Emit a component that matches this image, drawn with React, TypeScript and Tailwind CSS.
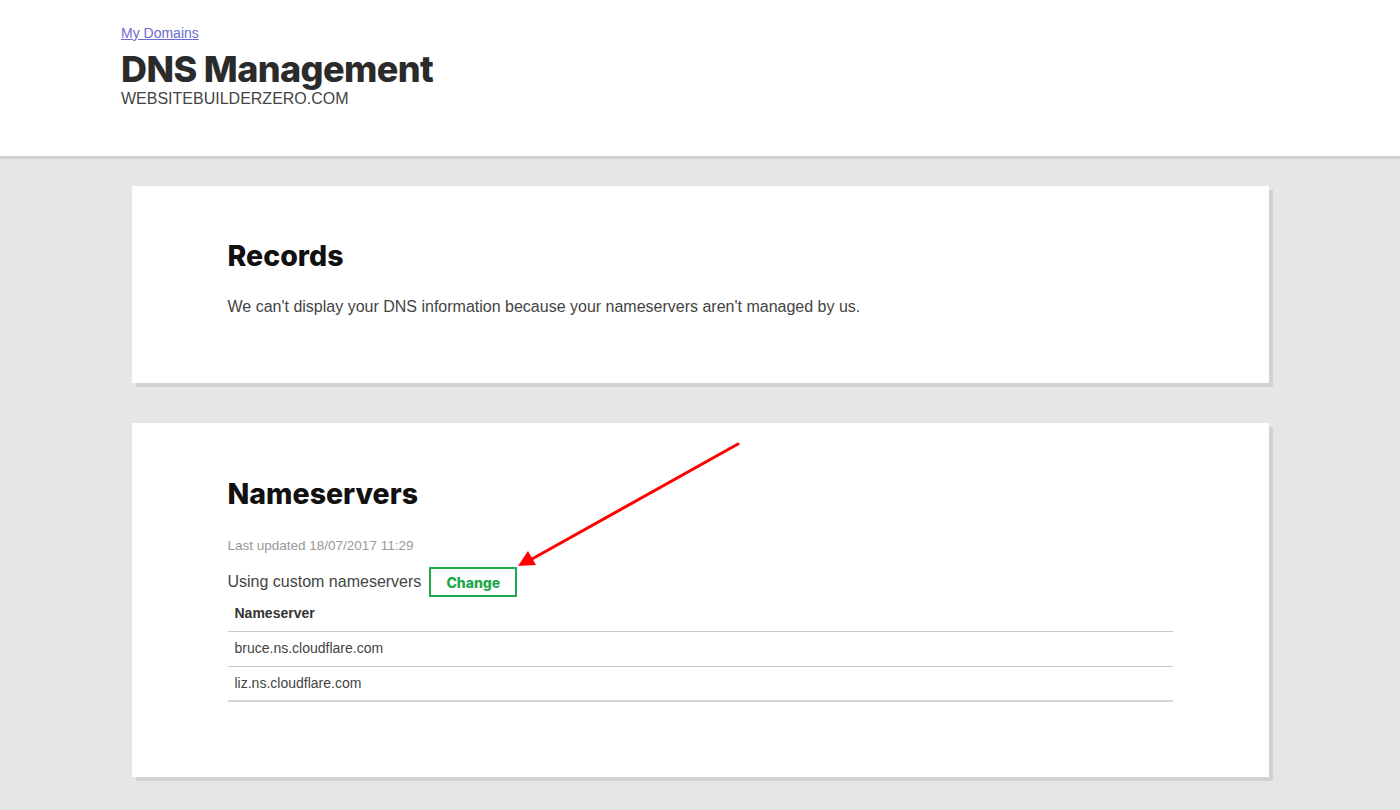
import React from "react";

const heading = { fontFamily: "Inter, 'Noto Sans', sans-serif" };
const arial = { fontFamily: "'Liberation Sans', Arial, sans-serif" };

export default function App() {
  return (
    <div className="relative min-h-[810px] bg-[#e6e6e6]" style={arial}>
      <header className="h-[159px] bg-white border-b-[3px] border-[#d0d0d0] pl-[121px] pt-[24px]">
        <a href="#" className="block text-[14px] leading-[18px] text-[#6b6bd3] underline w-fit">My Domains</a>
        <h1 className="mt-[9px] text-[36px] leading-[36px] font-extrabold text-[#2b2b2b] tracking-[-0.6px]" style={heading}>
          DNS Management
        </h1>
        <div className="mt-[2px] text-[16px] leading-[20px] text-[#444]">WEBSITEBUILDERZERO.COM</div>
      </header>

      <main className="flex flex-col items-center pt-[27px] gap-[40px] pb-[30px]">
        <section className="w-[1137px] bg-white shadow-[4px_4px_0_0_#d2d2d2] px-[96px] pt-[53px] pb-[64px]">
          <h2 className="text-[28.5px] leading-[34px] font-extrabold text-[#111]" style={heading}>Records</h2>
          <p className="mt-[22px] text-[16px] leading-[24px] text-[#444]">
            We can't display your DNS information because your nameservers aren't managed by us.
          </p>
        </section>

        <section className="w-[1137px] bg-white shadow-[4px_4px_0_0_#d2d2d2] px-[96px] pt-[54px] pb-[75px]">
          <h2 className="text-[28.5px] leading-[34px] font-extrabold text-[#111]" style={heading}>Nameservers</h2>
          <p className="mt-[25px] text-[13.5px] leading-[20px] text-[#999]">Last updated 18/07/2017 11:29</p>
          <div className="mt-[11px] flex items-center h-[30px]">
            <span className="text-[16px] text-[#444]">Using custom nameservers</span>
            <button
              className="ml-[8px] w-[88px] h-[30px] border-2 border-[#1ea84a] text-[#1ea84a] text-[14px] font-extrabold"
              style={heading}
            >
              Change
            </button>
          </div>
          <table className="w-full text-[14px] text-[#444] border-collapse">
            <thead>
              <tr className="h-[34px] border-b border-[#c8c8c8]">
                <th className="text-left pl-[7px] font-bold text-[#333]">Nameserver</th>
              </tr>
            </thead>
            <tbody>
              <tr className="h-[35px] border-b border-[#c8c8c8]">
                <td className="pl-[7px]">bruce.ns.cloudflare.com</td>
              </tr>
              <tr className="h-[35px] border-b-2 border-[#d6d6d6]">
                <td className="pl-[7px]">liz.ns.cloudflare.com</td>
              </tr>
            </tbody>
          </table>
        </section>
      </main>

      <svg className="absolute left-0 top-0 pointer-events-none" width="1400" height="810">
        <line x1="738" y1="444" x2="532" y2="559" stroke="#ff0000" strokeWidth="3" strokeLinecap="round" />
        <polygon points="518,566 528,551 536,565" fill="#ff0000" />
      </svg>
    </div>
  );
}
